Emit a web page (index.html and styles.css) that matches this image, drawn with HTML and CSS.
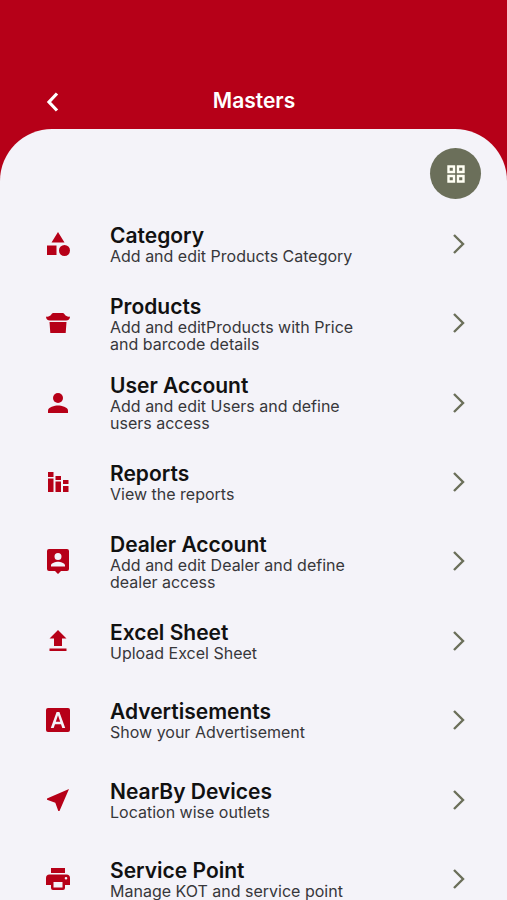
FILE: index.html
```html
<!DOCTYPE html>
<html lang="en">
<head>
<meta charset="utf-8">
<meta name="viewport" content="width=device-width, initial-scale=1">
<title>Masters</title>
<link rel="stylesheet" href="styles.css">
</head>
<body>
<header class="header">
  <button class="back" type="button" aria-label="Back"><svg width="24" height="24" viewBox="0 0 24 24"><path d="M16 4.500 8 13l8 8.500" fill="none" stroke="currentColor" stroke-width="3.200"/></svg></button>
  <h1 class="heading">Masters</h1>
</header>
<main class="panel">
  <div class="toolbar">
    <button class="view" type="button" aria-label="Grid view"><svg width="24" height="24" viewBox="0 0 24 24"><path d="M4.500 4.500h5.500v5.500H4.500zM14 4.500h5.500v5.500H14zM4.500 14h5.500v5.500H4.500zM14 14h5.500v5.500H14z" fill="none" stroke="currentColor" stroke-width="2.400"/></svg></button>
  </div>
  <nav class="list">
    <a class="row" href="#">
      <svg class="icon" viewBox="0 0 28 28"><path d="M14 2l6.500 10.500h-13zM3 15.500h9.500V25H3z"/><circle cx="20.500" cy="20.500" r="5.500"/></svg>
      <span class="text"><span class="name">Category</span><span class="note">Add and edit Products Category</span></span>
      <svg class="chevron" viewBox="0 0 24 24"><path d="M7 3l9 9-9 9"/></svg>
    </a>
    <a class="row" href="#">
      <svg class="icon" viewBox="0 0 28 28"><path d="M2 7.500c2 .6 4-.2 5.300-2C8 4.400 8.800 4 10 4h8c1.200 0 2 .4 2.700 1.500 1.300 1.800 3.300 2.600 5.300 2 0 2.500-1.500 4-4 4H6c-2.500 0-4-1.500-4-4zM5.500 13h17l-.8 11H6.300z"/></svg>
      <span class="text"><span class="name">Products</span><span class="note">Add and editProducts with Price and barcode details</span></span>
      <svg class="chevron" viewBox="0 0 24 24"><path d="M7 3l9 9-9 9"/></svg>
    </a>
    <a class="row" href="#">
      <svg class="icon" viewBox="0 0 28 28"><circle cx="14" cy="9" r="5"/><path d="M4 24v-2.500c0-3.300 6.700-5 10-5s10 1.700 10 5V24z"/></svg>
      <span class="text"><span class="name">User Account</span><span class="note">Add and edit Users and define users access</span></span>
      <svg class="chevron" viewBox="0 0 24 24"><path d="M7 3l9 9-9 9"/></svg>
    </a>
    <a class="row" href="#">
      <svg class="icon" viewBox="0 0 28 28"><path d="M4 4h5.500v5H4zM4 10.500h5.500V24H4zM11.500 8h5.500v4h-5.500zM11.500 13.500h5.500V24h-5.500zM19 12h5.500v4H19zM19 18h5.500v6H19z"/></svg>
      <span class="text"><span class="name">Reports</span><span class="note">View the reports</span></span>
      <svg class="chevron" viewBox="0 0 24 24"><path d="M7 3l9 9-9 9"/></svg>
    </a>
    <a class="row" href="#">
      <svg class="icon" viewBox="0 0 28 28"><path fill-rule="evenodd" d="M5 2h18a2 2 0 0 1 2 2v18a2 2 0 0 1-2 2h-6l-3 3-3-3H5a2 2 0 0 1-2-2V4a2 2 0 0 1 2-2zm9 4a3.500 3.500 0 1 0 0 7 3.500 3.500 0 0 0 0-7zM7 19.500h14v-1.200c0-2.300-4.700-3.600-7-3.600s-7 1.300-7 3.600z"/></svg>
      <span class="text"><span class="name">Dealer Account</span><span class="note">Add and edit Dealer and define dealer access</span></span>
      <svg class="chevron" viewBox="0 0 24 24"><path d="M7 3l9 9-9 9"/></svg>
    </a>
    <a class="row" href="#">
      <svg class="icon" viewBox="0 0 28 28"><path d="M14 3l8.500 8.500H18V19h-8v-7.500H5.500zM5.500 21.500h17V24h-17z"/></svg>
      <span class="text"><span class="name">Excel Sheet</span><span class="note">Upload Excel Sheet</span></span>
      <svg class="chevron" viewBox="0 0 24 24"><path d="M7 3l9 9-9 9"/></svg>
    </a>
    <a class="row" href="#">
      <svg class="icon" viewBox="0 0 28 28"><path fill-rule="evenodd" d="M4 2h20a2 2 0 0 1 2 2v20a2 2 0 0 1-2 2H4a2 2 0 0 1-2-2V4a2 2 0 0 1 2-2zm8.600 4L6.800 22h2.900l1.300-3.800h6L18.300 22h2.900L15.400 6zM14 9.300l2.200 6.500h-4.400z"/></svg>
      <span class="text"><span class="name">Advertisements</span><span class="note">Show your Advertisement</span></span>
      <svg class="chevron" viewBox="0 0 24 24"><path d="M7 3l9 9-9 9"/></svg>
    </a>
    <a class="row" href="#">
      <svg class="icon" viewBox="0 0 28 28"><path d="M25 3L15.500 25h-1.200l-3-8.300L3 13.700v-1.200z"/></svg>
      <span class="text"><span class="name">NearBy Devices</span><span class="note">Location wise outlets</span></span>
      <svg class="chevron" viewBox="0 0 24 24"><path d="M7 3l9 9-9 9"/></svg>
    </a>
    <a class="row" href="#">
      <svg class="icon" viewBox="0 0 28 28"><path fill-rule="evenodd" d="M7 3h14v5H7zM5.500 9.500h17A3.500 3.500 0 0 1 26 13v7h-5v3a2 2 0 0 1-2 2H9a2 2 0 0 1-2-2v-3H2v-7a3.500 3.500 0 0 1 3.500-3.500zM9.500 17v5.500h9V17zM22 12a1.300 1.300 0 1 0 0 2.600 1.300 1.300 0 0 0 0-2.600z"/></svg>
      <span class="text"><span class="name">Service Point</span><span class="note">Manage KOT and service point</span></span>
      <svg class="chevron" viewBox="0 0 24 24"><path d="M7 3l9 9-9 9"/></svg>
    </a>
  </nav>
</main>
</body>
</html>
```
FILE: styles.css
```css
* {
  box-sizing: border-box;
}

body {
  margin: 0;
  background: #b60018;
  font-family: Inter, "Liberation Sans", sans-serif;
}

button {
  padding: 0;
  border: 0;
  display: grid;
  place-items: center;
}

.header {
  display: grid;
  grid-template-columns: 40px 1fr 40px;
  align-items: center;
  padding: 86px 32px 13px 33px;
}

.back {
  height: 30px;
  background: none;
  color: #fff;
}

.heading {
  margin: 0;
  font-size: 21px;
  line-height: 30px;
  font-weight: 600;
  text-align: center;
  color: #fff;
}

.panel {
  padding-top: 19px;
  background: #f4f3f9;
  border-radius: 52px 52px 0 0;
}

.toolbar {
  display: flex;
  justify-content: flex-end;
  padding: 0 26px 5px;
}

.view {
  width: 51px;
  height: 51px;
  border-radius: 50%;
  background: #6b6f5a;
  color: #fffff4;
}

.list {
  display: grid;
  grid-auto-rows: 1fr;
  min-height: 715px;
}

.row {
  display: grid;
  grid-template-columns: 28px 1fr 24px;
  column-gap: 38px;
  align-items: center;
  padding: 0 36px 0 44px;
  color: #111;
  text-decoration: none;
}

.icon {
  width: 28px;
  height: 28px;
  fill: #b60018;
}

.text {
  display: flex;
  flex-direction: column;
  max-width: 264px;
}

.name {
  font-size: 21px;
  line-height: 25px;
  font-weight: 600;
}

.note {
  font-size: 16px;
  line-height: 17px;
  color: #37373b;
}

.chevron {
  width: 24px;
  height: 24px;
  fill: none;
  stroke: #6b6f5a;
  stroke-width: 2.4;
}
```
